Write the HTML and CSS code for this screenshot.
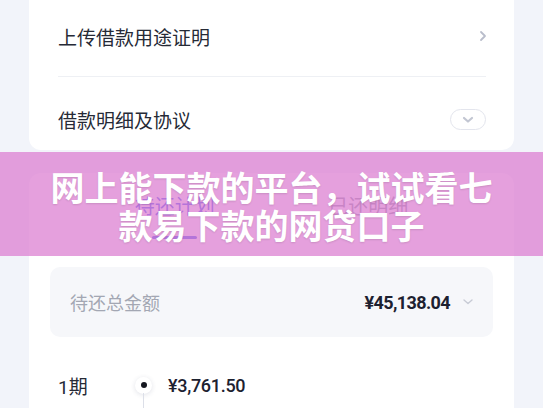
FILE: index.html
```html
<!DOCTYPE html>
<html lang="zh-CN">
<head>
  <meta charset="UTF-8" />
  <meta name="viewport" content="width=device-width, initial-scale=1.0"/>
  <title>借款详情</title>
  <link rel="stylesheet" href="styles.css">
</head>
<body>
  <div class="page">
    <div class="card card-top">
      <div class="row">
        <span>上传借款用途证明</span>
        <svg class="arrow-right" width="8" height="12" viewBox="0 0 8 12">
          <path d="M2 2 L6 6 L2 10" fill="none" stroke="#b9bdcb" stroke-width="1.8" stroke-linecap="round" stroke-linejoin="round"/>
        </svg>
      </div>
      <div class="row row-last">
        <span>借款明细及协议</span>
        <span class="toggle">
          <svg width="12" height="8" viewBox="0 0 12 8">
            <path d="M2 2 L6 5.5 L10 2" fill="none" stroke="#c2c6d2" stroke-width="2.2" stroke-linecap="round" stroke-linejoin="round"/>
          </svg>
        </span>
      </div>
    </div>

    <div class="card card-plan">
      <div class="tabs">
        <div class="tab active">待还计划</div>
        <div class="tab">已还明细</div>
      </div>

      <div class="summary">
        <span class="summary-label">待还总金额</span>
        <span class="summary-amount">
          ¥45,138.04
          <svg width="10" height="6" viewBox="0 0 10 6">
            <path d="M1 1 L5 4.5 L9 1" fill="none" stroke="#c8cbd5" stroke-width="1.4" stroke-linecap="round" stroke-linejoin="round"/>
          </svg>
        </span>
      </div>

      <div class="plan-item">
        <div class="plan-period">1期</div>
        <div class="plan-node"><span class="node-dot"></span></div>
        <div class="plan-amount">¥3,761.50</div>
      </div>
      <div class="plan-sub">
        <div class="plan-date">2024/08/15</div>
        <div class="plan-line"></div>
        <div class="plan-detail">本金 ¥3,500.00 &nbsp;&nbsp; 利息 ¥261.50</div>
      </div>
    </div>
  </div>

  <div class="banner">
    <h1>网上能下款的平台，试试看七款易下款的网贷口子</h1>
  </div>
</body>
</html>
```

FILE: styles.css
```css
body {
  margin: 0;
  font-family: Roboto, "Noto Sans CJK SC", sans-serif;
  background: #f2f4fa;
  color: #262a36;
  overflow: hidden;
}

.page {
  padding: 0 29px;
}

.card {
  background: #fff;
  border-radius: 12px;
}

.card-top {
  border-radius: 0 0 12px 12px;
  padding: 0 28px 0 29px;
}

.row {
  display: flex;
  align-items: center;
  justify-content: space-between;
  height: 77px;
  padding-bottom: 4px;
  box-sizing: border-box;
  font-size: 19px;
  border-bottom: 1px solid #eef0f4;
}

.row-last {
  border-bottom: none;
  height: 73px;
  padding: 12px 0 0;
}

.arrow-right {
  margin-right: -1px;
}

.toggle {
  display: flex;
  align-items: center;
  justify-content: center;
  width: 36px;
  height: 21px;
  box-sizing: border-box;
  border: 1px solid #e3e5ed;
  border-radius: 11px;
}

.card-plan {
  margin-top: 23px;
  padding: 0 21px 40px;
}

.tabs {
  display: grid;
  grid-template-columns: 1fr 1fr;
  justify-items: center;
  padding: 20px 28px 0;
}

.tab {
  font-size: 20px;
  line-height: 28px;
  color: #8c909e;
  display: flex;
  flex-direction: column;
  align-items: center;
}

.tab::after {
  content: "";
  width: 45px;
  height: 3px;
  margin-top: 15px;
  border-radius: 2px;
  background: transparent;
}

.tab.active {
  color: #3f4ff0;
}

.tab.active::after {
  background: #3f4ff0;
}

.summary {
  margin-top: 28px;
  height: 70px;
  padding: 0 20px;
  background: #f6f7fa;
  border-radius: 10px;
  display: flex;
  align-items: center;
  justify-content: space-between;
}

.summary-label {
  font-size: 18px;
  color: #a3a7b3;
}

.summary-amount {
  display: flex;
  align-items: center;
  gap: 13px;
  font-size: 18px;
  font-weight: 700;
  letter-spacing: -0.6px;
  color: #1d2130;
}

.plan-item,
.plan-sub {
  display: flex;
  padding-left: 8px;
}

.plan-item {
  margin-top: 34px;
  align-items: center;
  height: 28px;
}

.plan-period {
  width: 77px;
  font-size: 19px;
}

.plan-node {
  width: 17px;
  margin-right: 16px;
  display: flex;
  justify-content: center;
}

.node-dot {
  width: 17px;
  height: 17px;
  border-radius: 50%;
  background: #fff;
  box-shadow: 0 1px 5px rgba(40, 50, 90, 0.14);
  display: flex;
  align-items: center;
  justify-content: center;
}

.node-dot::after {
  content: "";
  width: 6px;
  height: 6px;
  border-radius: 50%;
  background: #15171f;
}

.plan-amount {
  font-size: 18px;
  font-weight: 500;
  letter-spacing: -0.3px;
  color: #1d2130;
}

.plan-sub {
  margin-top: 7px;
  font-size: 13px;
  line-height: 18px;
  color: #a3a7b3;
}

.plan-date {
  width: 77px;
  font-size: 12px;
}

.plan-line {
  width: 17px;
  margin-right: 16px;
  margin-top: -13px;
  height: 40px;
  background: linear-gradient(#dcdfe8, #dcdfe8) center / 1px 100% no-repeat;
}

.banner {
  position: absolute;
  top: 152px;
  left: 0;
  right: 0;
  height: 104px;
  padding-top: 4px;
  box-sizing: border-box;
  background: rgba(220, 128, 210, 0.75);
  display: flex;
  align-items: center;
  justify-content: center;
}

.banner h1 {
  margin: 0;
  max-width: 450px;
  font-family: "Noto Sans CJK SC", sans-serif;
  font-size: 34px;
  font-weight: 700;
  line-height: 38px;
  text-align: center;
  color: #fff;
  text-shadow: 0 1px 2px rgba(0, 0, 0, 0.12);
}
```
